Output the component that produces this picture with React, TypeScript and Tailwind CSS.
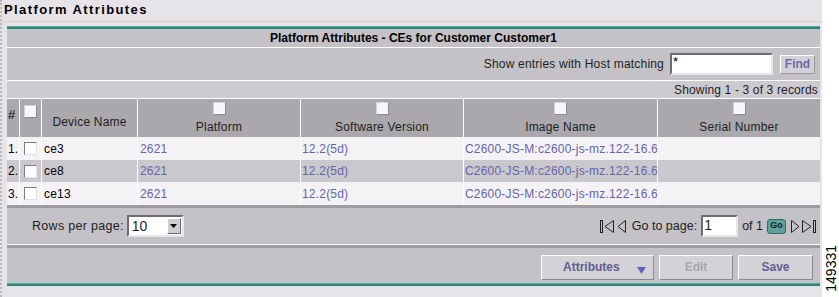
const links = ["2621", "12.2(5d)", "C2600-JS-M:c2600-js-mz.122-16.6"];

const rows = [
  { n: "1.", name: "ce3" },
  { n: "2.", name: "ce8" },
  { n: "3.", name: "ce13" },
];

function Box() {
  return (
    <span className="block h-[13px] w-[13px] border border-t-[#7d7b80] border-l-[#7d7b80] border-r-[#e4e2e6] border-b-[#e4e2e6] bg-white" />
  );
}

function HeadBox() {
  return (
    <span className="block h-[13px] w-[13px] border border-t-[#d4d2d6] border-l-[#d4d2d6] border-r-[#8c8a8e] border-b-[#8c8a8e] bg-[#f7f6f8]" />
  );
}

function Teal() {
  return <div className="h-[3px] bg-[#2f8579] border-t border-[#5aa89c]" />;
}

function First() {
  return (
    <svg width="15" height="15" viewBox="0 0 15 15" fill="none" stroke="#222" strokeWidth="1">
      <rect x="0.5" y="1.5" width="2" height="12" />
      <path d="M13.5 1.5 L5 7.5 L13.5 13.5 Z" />
    </svg>
  );
}

function Prev() {
  return (
    <svg width="9" height="15" viewBox="0 0 9 15" fill="none" stroke="#222" strokeWidth="1">
      <path d="M8.5 1.5 L1 7.5 L8.5 13.5 Z" />
    </svg>
  );
}

function Next() {
  return (
    <svg width="9" height="15" viewBox="0 0 9 15" fill="none" stroke="#222" strokeWidth="1">
      <path d="M0.5 1.5 L8 7.5 L0.5 13.5 Z" />
    </svg>
  );
}

function Last() {
  return (
    <svg width="15" height="15" viewBox="0 0 15 15" fill="none" stroke="#222" strokeWidth="1">
      <path d="M1.5 1.5 L10 7.5 L1.5 13.5 Z" />
      <rect x="12.5" y="1.5" width="2" height="12" />
    </svg>
  );
}

export default function App() {
  return (
    <div className="flex h-[297px] w-[839px] bg-white font-['Liberation_Sans',Arial,sans-serif] text-[12px] text-black">
      <div className="flex w-[822px] flex-col border-l-2 border-dotted border-[#b9b7bb] bg-[#e7e4e9]">
        {/* Title */}
        <div className="h-[22px] border-b border-[#dccdc6] pl-[2px] pt-[3px] text-[13px] font-bold leading-[14px] tracking-[1.4px]">
          Platform Attributes
        </div>

        <div className="ml-[5px] mt-[4px] w-[813px]">
          <Teal />
          <div className="flex h-[19px] items-center justify-center border-b border-white bg-[#c4c2c6] font-bold">
            Platform Attributes - CEs for Customer Customer1
          </div>
          <div className="flex h-[33px] items-center justify-end border-b border-white bg-[#c4c2c6] pr-[5px]">
            <span className="mr-[6px] text-[12px] tracking-[0.2px] text-[#1e1e1e]">Show entries with Host matching</span>
            <div className="h-[22px] w-[103px] border-2 border-t-[#6e6c70] border-l-[#6e6c70] border-r-[#e8e6ea] border-b-[#e8e6ea] bg-white pl-[1px] text-[13px] leading-[14px]">
              *
            </div>
            <div className="ml-[7px] flex h-[19px] w-[35px] items-center justify-center border border-t-white border-l-white border-r-[#9a989c] border-b-[#9a989c] bg-[#d3d1d5] font-bold text-[#6b6ba3]">
              Find
            </div>
          </div>
          <div className="flex h-[18px] items-center justify-end border-b border-white bg-[#cdcbcf] pr-[2px] text-[12px] tracking-[0.15px] text-[#1e1e1e]">
            Showing 1 - 3 of 3 records
          </div>

          {/* Table */}
          <div className="grid grid-cols-[12px_21px_95px_162px_162px_193px_162px] gap-x-px bg-white text-[12px] tracking-[0.2px]">
            <div className="h-[38px] bg-[#aaa8ac] pl-[1px] pt-[6px] text-[13px]">#</div>
            <div className="flex h-[38px] justify-center bg-[#aaa8ac] pt-[6px]">
              <HeadBox />
            </div>
            <div className="flex h-[38px] items-end justify-center bg-[#aaa8ac] pb-[6px] text-[#1e1e1e]">
              Device Name
            </div>
            {["Platform", "Software Version", "Image Name", "Serial Number"].map((h) => (
              <div key={h} className="flex h-[38px] flex-col items-center bg-[#aaa8ac] pt-[3px] text-[#1e1e1e]">
                <HeadBox />
                <span className="mt-[5px] leading-[15px]">{h}</span>
              </div>
            ))}

            {rows.map((r, i) => {
              const bg = i === 1 ? "bg-[#cac8cc]" : "bg-[#f4f2f5]";
              const h = i === 1 ? "h-[22px]" : "h-[23px]";
              return [
                <div key={r.n + "a"} className={`${bg} ${h} flex items-center pl-[1px]`}>{r.n}</div>,
                <div key={r.n + "b"} className={`${bg} ${h} flex items-center pl-[4px]`}>
                  <Box />
                </div>,
                <div key={r.n + "c"} className={`${bg} ${h} flex items-center pl-[2px]`}>{r.name}</div>,
                ...links.map((l, j) => (
                  <div key={r.n + l} className={`${bg} ${h} flex items-center whitespace-nowrap ${j === 0 ? "pl-[2px]" : "pl-[1px]"} text-[#6464aa]`}>
                    {l}
                  </div>
                )),
                <div key={r.n + "s"} className={`${bg} ${h}`} />,
              ];
            })}
          </div>

          {/* Pagination */}
          <div className="h-[3px] bg-[#9e9ca0]" />
          <div className="flex h-[37px] items-center justify-between border-b border-white bg-[#c4c2c6] pl-[25px] pr-[4px] text-[#1e1e1e]">
            <div className="flex items-center">
              <span className="text-[12.5px] tracking-[0.3px]">Rows per page:</span>
              <div className="ml-[3px] flex h-[22px] w-[57px] items-center border-2 border-t-[#6e6c70] border-l-[#6e6c70] border-r-[#e8e6ea] border-b-[#e8e6ea] bg-white">
                <span className="flex-1 pl-[3px] text-[14px]">10</span>
                <span className="mr-[1px] flex h-[16px] w-[14px] items-center justify-center border border-t-white border-l-white border-r-[#6e6c70] border-b-[#6e6c70] bg-[#cfcdd1]">
                  <svg width="7" height="4" viewBox="0 0 7 4">
                    <path d="M0 0 H7 L3.5 4 Z" fill="#000" />
                  </svg>
                </span>
              </div>
            </div>
            <div className="flex items-center text-[12.5px]">
              <First />
              <span className="ml-[2px]"><Prev /></span>
              <span className="ml-[6px]">Go to page:</span>
              <div className="ml-[4px] h-[22px] w-[37px] border-2 border-t-[#6e6c70] border-l-[#6e6c70] border-r-[#e8e6ea] border-b-[#e8e6ea] bg-white pl-[1px] text-[14px] leading-[17px]">
                1
              </div>
              <span className="ml-[4px]">of 1</span>
              <span className="ml-[4px] flex h-[15px] w-[19px] items-center justify-center rounded-[3px] border border-[#2c6e66] bg-[#5fa198] text-[9px] font-bold text-[#123]">
                Go
              </span>
              <span className="ml-[5px]"><Next /></span>
              <span className="ml-[1px]"><Last /></span>
            </div>
          </div>
          <div className="h-[3px] bg-[#9e9ca0]" />

          {/* Buttons */}
          <div className="flex h-[35px] items-center justify-end gap-[5px] bg-[#c4c2c6] pr-[7px] pt-[3px] font-bold">
            <div className="relative flex h-[25px] w-[113px] items-center border border-t-white border-l-white border-r-[#8c8a8e] border-b-[#8c8a8e] bg-[#d4d2d6] pl-[21px] text-[#5f5f91]">
              Attributes
              <svg className="absolute right-[7px] top-[11px]" width="9" height="7" viewBox="0 0 9 7">
                <path d="M0 0 H9 L4.5 7 Z" fill="#6060c0" />
              </svg>
            </div>
            <div className="flex h-[25px] w-[74px] items-center justify-center border border-t-white border-l-white border-r-[#8c8a8e] border-b-[#8c8a8e] bg-[#d4d2d6] text-[#a8a7ae]">
              Edit
            </div>
            <div className="flex h-[25px] w-[75px] items-center justify-center border border-t-white border-l-white border-r-[#8c8a8e] border-b-[#8c8a8e] bg-[#d4d2d6] text-[#5f5f91]">
              Save
            </div>
          </div>
          <Teal />
        </div>
      </div>
      <div className="flex flex-1 items-end justify-center pb-[5px]">
        <span className="rotate-180 text-[14px] leading-[14px] [writing-mode:vertical-rl]">149331</span>
      </div>
    </div>
  );
}
